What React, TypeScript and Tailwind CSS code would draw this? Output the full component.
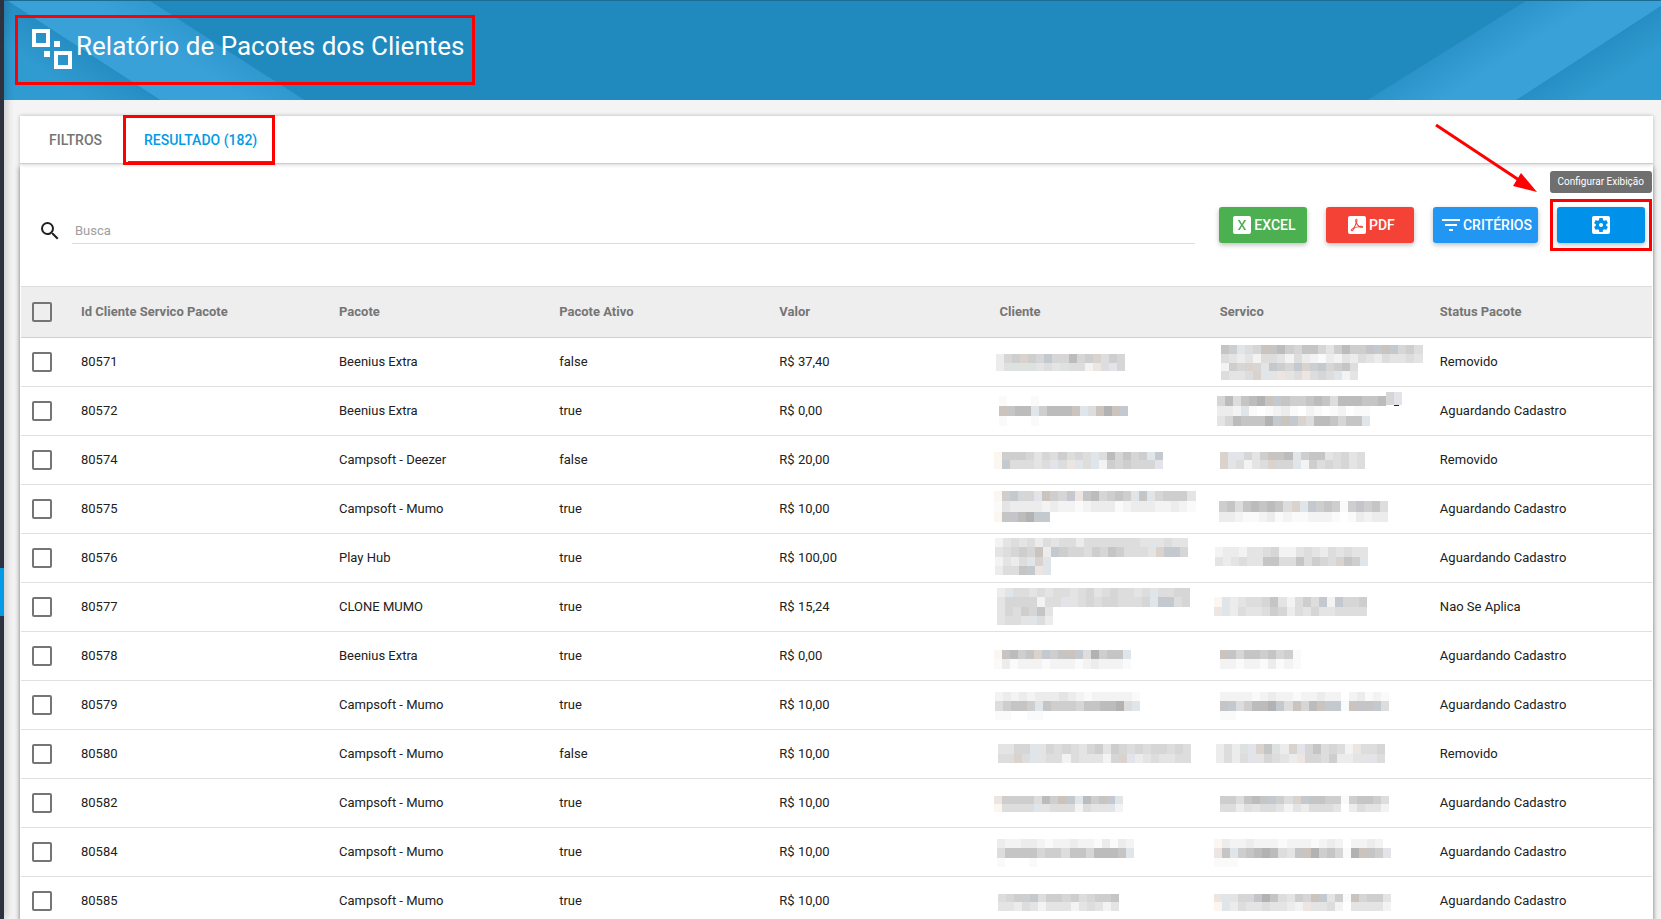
import React, { useState } from 'react';
import { MdFilterList, MdSearch, MdSettingsApplications } from 'react-icons/md';

// One line of a censored cell: [y, height, one palette key per block]
type MosaicLine = [number, number, string];

interface Mosaic {
  x: number;
  lines: MosaicLine[];
}

interface Pacote {
  id: string;
  pacote: string;
  ativo: boolean;
  valor: string;
  status: string;
  cliente: Mosaic;
  servico: Mosaic;
}

const PALETTE: Record<string, string> = {
  '1': '#fafafa',
  '2': '#f3f3f3',
  '3': '#ececec',
  '4': '#e4e4e4',
  '5': '#dddddd',
  '6': '#d6d6d6',
  '7': '#cecece',
  '8': '#c5c5c5',
  '9': '#bcbcbc',
  A: '#b2b2b2',
  b: '#dfe5e9',
  B: '#c3c9ce',
  c: '#fbf6f0',
  g: '#dde2df',
  v: '#e3e4ea',
  V: '#c5c4cb',
  w: '#ece5e2',
  W: '#cac3be',
  x: '#dad2cd',
};

const pacotes: Pacote[] = [
  {
    id: '80571', pacote: 'Beenius Extra', ativo: false, valor: 'R$ 37,40', status: 'Removido',
    cliente: { x: 12, lines: [[16, 9, '367x76B66967x576'], [25, 8, '3ggggv54g552w5v6']] },
    servico: {
      x: 17,
      lines: [
        [7, 9, '87b56W897688647977VBWB675'],
        [16, 9, '5434255425321324354354454'],
        [25, 8, '276x64B76Bx7B6785'],
        [33, 9, '5445xb4w45w565b24'],
      ],
    },
  },
  {
    id: '80572', pacote: 'Beenius Extra', ativo: true, valor: 'R$ 0,00', status: 'Aguardando Cadastro',
    cliente: { x: 15, lines: [[9, 10, '1...1'], [19, 10, 'W899b7999Wb5WAWB'], [29, 10, '1...1']] },
    servico: {
      x: 13,
      lines: [
        [5, 13, '.....................6v'],
        [9, 10, '69589AWB8778985999889'],
        [19, 10, '332b101231.21.12.11'],
        [29, 10, '469888ABWBx5998688b'],
      ],
    },
  },
  {
    id: '80574', pacote: 'Campsoft - Deezer', ativo: false, valor: 'R$ 20,00', status: 'Removido',
    cliente: { x: 10, lines: [[16, 8, 'c77764657565b596867bB'], [24, 9, 'cB55545v5wv5b2767666v']] },
    servico: { x: 16, lines: [[16, 8, 'xvv647W89b78845645'], [24, 9, 'x45245x66b27565645']] },
  },
  {
    id: '80575', pacote: 'Campsoft - Mumo', ativo: true, valor: 'R$ 10,00', status: 'Aguardando Cadastro',
    cliente: {
      x: 10,
      lines: [[6, 10, 'c7B66vW76Bw896787b8b67774'], [16, 11, '1433332322123331233322321'], [27, 10, 'c8V9ABB']],
    },
    servico: { x: 15, lines: [[16, 11, '785898985xbB78717V785'], [27, 10, '332112312112221.13233']] },
  },
  {
    id: '80576', pacote: 'Play Hub', ativo: true, valor: 'R$ 100,00', status: 'Aguardando Cadastro',
    cliente: {
      x: 11,
      lines: [
        [4, 9, '2454535455355555554b4544'],
        [13, 10, '45676W3B766576875554xBB6'],
        [23, 9, '2b35bxb'],
        [32, 9, '3558Bwb'],
      ],
    },
    servico: { x: 11, lines: [[13, 10, '2332445622454354544'], [23, 9, '434544885585765x87b']] },
  },
  {
    id: '80577', pacote: 'CLONE MUMO', ativo: true, valor: 'R$ 15,24', status: 'Nao Se Aplica',
    cliente: {
      x: 13,
      lines: [
        [5, 9, '3b55454554564565545b5566'],
        [14, 10, '46666255v4565665556bBB56'],
        [24, 9, '4657684'],
        [33, 9, '4554b53'],
      ],
    },
    servico: { x: 10, lines: [[14, 10, 'cb34556842575B2B667'], [24, 9, 'wb35445763546445555']] },
  },
  {
    id: '80578', pacote: 'Beenius Extra', ativo: true, valor: 'R$ 0,00', status: 'Aguardando Cadastro',
    cliente: { x: 10, lines: [[18, 9, 'c8978xB78WB5A788b'], [27, 10, '13122212221232221']] },
    servico: { x: 16, lines: [[18, 9, 'WV68878671'], [27, 10, '2212213121']] },
  },
  {
    id: '80579', pacote: 'Campsoft - Mumo', ativo: true, valor: 'R$ 10,00', status: 'Aguardando Cadastro',
    cliente: { x: 11, lines: [[11, 9, '232323334321222221'], [20, 10, '57887b877768899A5b'], [30, 9, '11..11']] },
    servico: { x: 16, lines: [[11, 9, '222212322122322.23121'], [20, 10, '8B5799AB5W69WBB1WV8B5'], [30, 9, '11']] },
  },
  {
    id: '80580', pacote: 'Campsoft - Mumo', ativo: false, valor: 'R$ 10,00', status: 'Removido',
    cliente: { x: 14, lines: [[14, 10, '4466b4656546747656566565'], [24, 9, '55x5b4552544426xv3454455']] },
    servico: { x: 12, lines: [[14, 10, '353gvx8g3xv685652w556'], [24, 9, '3535v46543w66573344v5']] },
  },
  {
    id: '80582', pacote: 'Campsoft - Mumo', ativo: true, valor: 'R$ 10,00', status: 'Aguardando Cadastro',
    cliente: { x: 10, lines: [[17, 8, 'w7777597WBb97WBb'], [25, 8, 'c5555b45552544b2']] },
    servico: { x: 16, lines: [[17, 8, '775898B75xB887717V875'], [25, 8, '553g45542435554.35442']] },
  },
  {
    id: '80584', pacote: 'Campsoft - Mumo', ativo: true, valor: 'R$ 10,00', status: 'Aguardando Cadastro',
    cliente: { x: 13, lines: [[11, 9, '32233212232213132'], [20, 10, '5888867758869998b'], [30, 9, '1...1']] },
    servico: { x: 10, lines: [[11, 9, 'c322322212221232.2232'], [20, 10, 'w8b789A9548WA7861AW87v'], [30, 9, '111']] },
  },
  {
    id: '80585', pacote: 'Campsoft - Mumo', ativo: true, valor: 'R$ 10,00', status: 'Aguardando Cadastro',
    cliente: { x: 14, lines: [[17, 8, '5677B5776756778'], [25, 9, '443542444245424']] },
    servico: { x: 10, lines: [[17, 8, 'wb466VA85476WB471W6774'], [25, 9, 'cb354454432w4452.44442']] },
  },
];

const BLOCK = 8.06;

function Censored({ mosaic, cursor }: { mosaic: Mosaic; cursor?: boolean }) {
  return (
    <svg className="block h-12 w-full" shapeRendering="crispEdges" aria-hidden="true">
      {mosaic.lines.map(([y, h, cells]) =>
        cells.split('').map((key, i) =>
          PALETTE[key] ? (
            <rect key={`${y}-${i}`} x={mosaic.x + i * BLOCK} y={y} width={BLOCK} height={h} fill={PALETTE[key]} />
          ) : null
        )
      )}
      {cursor && <rect x="190" y="18" width="5" height="1" fill="#222" />}
    </svg>
  );
}

function ExcelIcon() {
  return (
    <svg className="size-6" viewBox="0 0 24 24" fill="currentColor" aria-hidden="true">
      <path d="M19,3H5A2,2 0 0,0 3,5V19A2,2 0 0,0 5,21H19A2,2 0 0,0 21,19V5A2,2 0 0,0 19,3M16.2,17H14.2L12,13.2L9.8,17H7.8L11,12L7.8,7H9.8L12,10.8L14.2,7H16.2L13,12L16.2,17Z" />
    </svg>
  );
}

function PdfIcon() {
  return (
    <svg className="size-6" viewBox="0 0 24 24" fill="currentColor" aria-hidden="true">
      <path d="M11.43,10.94C11.2,11.68 10.87,12.47 10.42,13.34C10.22,13.72 10,14.08 9.92,14.38L10.03,14.34V14.34C11.3,13.85 12.5,13.57 13.37,13.41C13.22,13.31 13.08,13.2 12.96,13.09C12.36,12.58 11.84,11.84 11.43,10.94M17.91,14.75C17.74,14.94 17.44,15.05 17,15.05C16.24,15.05 15,14.82 14,14.31C12.28,14.5 11,14.73 9.97,15.06C9.92,15.08 9.86,15.1 9.79,15.13C8.55,17.25 7.63,18.2 6.82,18.2C6.66,18.2 6.5,18.16 6.38,18.09L5.9,17.78L5.87,17.76C5.8,17.55 5.78,17.38 5.82,17.19C5.93,16.66 6.5,15.82 7.7,15.07C7.89,14.93 8.19,14.77 8.59,14.58C8.89,14.06 9.21,13.45 9.55,12.78C10.06,11.75 10.38,10.73 10.63,9.85V9.84C10.26,8.63 10.04,7.9 10.41,6.57C10.5,6.19 10.83,5.8 11.2,5.8H11.44C11.67,5.8 11.89,5.88 12.05,6.04C12.71,6.7 12.4,8.31 12.07,9.64C12.05,9.7 12.04,9.75 12.03,9.78C12.43,10.91 13,11.82 13.63,12.34C13.89,12.54 14.18,12.74 14.5,12.92C14.95,12.87 15.38,12.85 15.79,12.85C17.03,12.85 17.78,13.07 18.07,13.54C18.17,13.7 18.22,13.89 18.19,14.09C18.18,14.34 18.09,14.57 17.91,14.75M19,3H5C3.89,3 3,3.89 3,5V19A2,2 0 0,0 5,21H19A2,2 0 0,0 21,19V5C21,3.89 20.1,3 19,3M17.5,14.04C17.4,13.94 17,13.69 15.6,13.69C15.53,13.69 15.46,13.69 15.37,13.79C16.1,14.11 16.81,14.3 17.27,14.3C17.34,14.3 17.4,14.29 17.46,14.28H17.5C17.55,14.26 17.58,14.25 17.57,14.15C17.57,14.12 17.55,14.08 17.5,14.04M8.33,15.5C8.12,15.62 7.95,15.73 7.85,15.81C7.14,16.46 6.69,17.12 6.64,17.5C7.09,17.35 7.68,16.69 8.33,15.5M11.35,8.59L11.4,8.55C11.47,8.23 11.5,7.95 11.56,7.73L11.59,7.57C11.69,7 11.67,6.71 11.5,6.47L11.35,6.42C11.33,6.45 11.3,6.5 11.28,6.54C11.11,6.96 11.12,7.69 11.35,8.59Z" />
    </svg>
  );
}

function HeaderArt() {
  return (
    <>
      <svg className="absolute left-0 top-0" width="310" height="99" aria-hidden="true">
        <defs>
          <linearGradient id="leftFold" gradientUnits="userSpaceOnUse" x1="82" y1="50" x2="60" y2="84">
            <stop offset="0" stopColor="#268dc3" />
            <stop offset="1" stopColor="#309bd0" />
          </linearGradient>
          <linearGradient id="leftBand" gradientUnits="userSpaceOnUse" x1="226" y1="50" x2="208" y2="78">
            <stop offset="0" stopColor="#2f98cf" />
            <stop offset="1" stopColor="#39a1d8" />
          </linearGradient>
        </defs>
        <polygon points="0,0 4,0 158,100 0,100" fill="url(#leftFold)" />
        <polygon points="4,0 146,0 302,100 158,100" fill="url(#leftBand)" />
      </svg>
      <svg className="absolute right-0 top-0" width="300" height="99" aria-hidden="true">
        <defs>
          <linearGradient id="rightBand" gradientUnits="userSpaceOnUse" x1="84" y1="50" x2="106" y2="84">
            <stop offset="0" stopColor="#2b93c9" />
            <stop offset="1" stopColor="#39a1d8" />
          </linearGradient>
          <linearGradient id="rightFold" gradientUnits="userSpaceOnUse" x1="231" y1="50" x2="250" y2="80">
            <stop offset="0" stopColor="#268ec4" />
            <stop offset="1" stopColor="#309bd0" />
          </linearGradient>
        </defs>
        <polygon points="165,0 300,0 300,5 154,100 5,100" fill="url(#rightBand)" />
        <polygon points="300,5 300,100 154,100" fill="url(#rightFold)" />
      </svg>
    </>
  );
}

const checkboxClass =
  'block size-5 appearance-none rounded-[2px] border-2 border-[#757575] checked:border-[#039be5] checked:bg-[#039be5]';

const buttonClass =
  'flex h-9 min-w-[88px] items-center justify-center rounded-[3px] px-1.5 text-sm font-medium text-white shadow-[0_2px_5px_rgba(0,0,0,0.26)]';

export default function App() {
  const [busca, setBusca] = useState('');
  const [selected, setSelected] = useState<string[]>([]);

  const visible = pacotes.filter((p) =>
    `${p.id} ${p.pacote} ${p.status}`.toLowerCase().includes(busca.toLowerCase())
  );

  const toggle = (id: string) =>
    setSelected((prev) => (prev.includes(id) ? prev.filter((s) => s !== id) : [...prev, id]));

  const allSelected = selected.length === pacotes.length;

  return (
    <div className="flex h-screen overflow-hidden bg-[#f4f4f4] font-[Roboto,sans-serif] text-[13px] text-[#212121]">
      {/* Collapsed side menu */}
      <aside className="z-10 flex w-1 shrink-0 flex-col bg-[#2d323e] pt-[568px] shadow-[0_0_10px_rgba(0,0,0,0.4)]">
        <span className="h-12 bg-[#039be5]" />
      </aside>

      <main className="min-w-0 flex-1">
        <header className="relative flex h-[100px] items-start border-t border-[#1b6c94] bg-[#208abe]">
          <HeaderArt />
          <div className="relative ml-[11px] mt-[14px] flex h-[70px] items-start border-3 border-[#fe0000] pl-[14px] pr-2 pt-[11px] text-white">
            <svg className="size-10" viewBox="0 0 40 40" fill="currentColor" aria-hidden="true">
              <path fillRule="evenodd" d="M0 0h18v18H0zM4 4v10h10V4zM22 22h18v18H22zM26 26v10h10V26z" />
              <path d="M22 12h6v6h-6zM12 22h6v6h-6z" />
            </svg>
            <h1 className="pl-1 text-[26px] leading-[34px]">Relatório de Pacotes dos Clientes</h1>
          </div>
        </header>

        <div className="pl-4 pr-2 pt-4">
          <div className="relative flex h-12 border-b border-[#cfcfcf] bg-white text-sm font-medium shadow-[0_0_4px_rgba(0,0,0,0.25)]">
            <button className="pl-[29px] pr-[26px] text-[#757575]">FILTROS</button>
            <div className="relative flex">
              <button className="border-b-2 border-[#3f51b5] pl-4 pr-[17px] pt-0.5 text-[#039be5]">RESULTADO (182)</button>
              <span className="pointer-events-none absolute -bottom-0.5 -left-[5px] -right-px -top-px border-3 border-[#fe0000]" />
            </div>
            {/* Arrow pointing at the display settings */}
            <svg className="pointer-events-none absolute right-[114px] top-2 z-10" width="106" height="72" aria-hidden="true">
              <path d="M3 1L86 56" stroke="#fe0000" strokeWidth="3" fill="none" />
              <polygon points="104,68 88,49 80,62" fill="#fe0000" />
            </svg>
          </div>

          <section className="bg-white shadow-[0_2px_5px_rgba(0,0,0,0.55)]">
            <div className="flex h-[122px] items-start gap-6 pl-[18px] pr-2 pt-[43px]">
              <div className="flex flex-1 items-center gap-[10px] pt-1.5">
                <MdSearch size={24} className="mt-1" />
                <input
                  type="text"
                  aria-label="Busca"
                  placeholder="Busca"
                  value={busca}
                  onChange={(e) => setBusca(e.target.value)}
                  className="h-[31px] flex-1 border-b border-[#dcdcdc] px-[3px] pt-1 outline-none placeholder:text-[#9e9e9e]"
                />
              </div>
              <div className="flex gap-[19px]">
                <button className={`${buttonClass} bg-[#4caf50]`}>
                  <ExcelIcon />
                  EXCEL
                </button>
                <button className={`${buttonClass} bg-[#f44336]`}>
                  <PdfIcon />
                  PDF
                </button>
                <button className={`${buttonClass} bg-[#2196f3]`}>
                  <MdFilterList size={24} />
                  CRITÉRIOS
                </button>
                <div className="relative">
                  <button aria-label="Configurar Exibição" className={`${buttonClass} bg-[#0091ea]`}>
                    <MdSettingsApplications size={24} />
                  </button>
                  <span className="pointer-events-none absolute -inset-x-[7px] -inset-y-2 border-3 border-[#fe0000]" />
                  <span className="absolute -right-[7px] bottom-[50px] flex h-[22px] items-center whitespace-nowrap rounded-[3px] bg-[#6f6f6f] px-2 pb-0.5 text-[10px] text-white">
                    Configurar Exibição
                  </span>
                </div>
              </div>
            </div>

            <div className="px-px">
              <table className="w-full table-fixed border-collapse text-left">
                <colgroup>
                  <col className="w-11" />
                  <col className="w-[258px]" />
                  <col className="w-[13.5%]" />
                  <col className="w-[13.5%]" />
                  <col className="w-[13.5%]" />
                  <col className="w-[13.5%]" />
                  <col className="w-[13.5%]" />
                  <col />
                </colgroup>
                <thead>
                  <tr className="h-[51px] border-y border-t-[#dcdcdc] border-b-[#d0d0d0] bg-[#eeeeee] text-[#757575]">
                    <th className="pl-[11px]">
                      <input
                        type="checkbox"
                        aria-label="Selecionar todos"
                        checked={allSelected}
                        onChange={() => setSelected(allSelected ? [] : pacotes.map((p) => p.id))}
                        className={checkboxClass}
                      />
                    </th>
                    <th className="pl-4">Id Cliente Servico Pacote</th>
                    <th className="pl-4">Pacote</th>
                    <th className="pl-4">Pacote Ativo</th>
                    <th className="pl-4">Valor</th>
                    <th className="pl-4">Cliente</th>
                    <th className="pl-4">Servico</th>
                    <th className="pl-4">Status Pacote</th>
                  </tr>
                </thead>
                <tbody>
                  {visible.map((p) => (
                    <tr key={p.id} className="h-[49px] border-b border-[#e0e0e0]">
                      <td className="pl-[11px]">
                        <input
                          type="checkbox"
                          aria-label={`Selecionar ${p.id}`}
                          checked={selected.includes(p.id)}
                          onChange={() => toggle(p.id)}
                          className={checkboxClass}
                        />
                      </td>
                      <td className="pl-4">{p.id}</td>
                      <td className="pl-4">{p.pacote}</td>
                      <td className="pl-4">{String(p.ativo)}</td>
                      <td className="pl-4">{p.valor}</td>
                      <td>
                        <Censored mosaic={p.cliente} />
                      </td>
                      <td>
                        <Censored mosaic={p.servico} cursor={p.id === '80572'} />
                      </td>
                      <td className="pl-4">{p.status}</td>
                    </tr>
                  ))}
                </tbody>
              </table>
            </div>
          </section>
        </div>
      </main>
    </div>
  );
}
